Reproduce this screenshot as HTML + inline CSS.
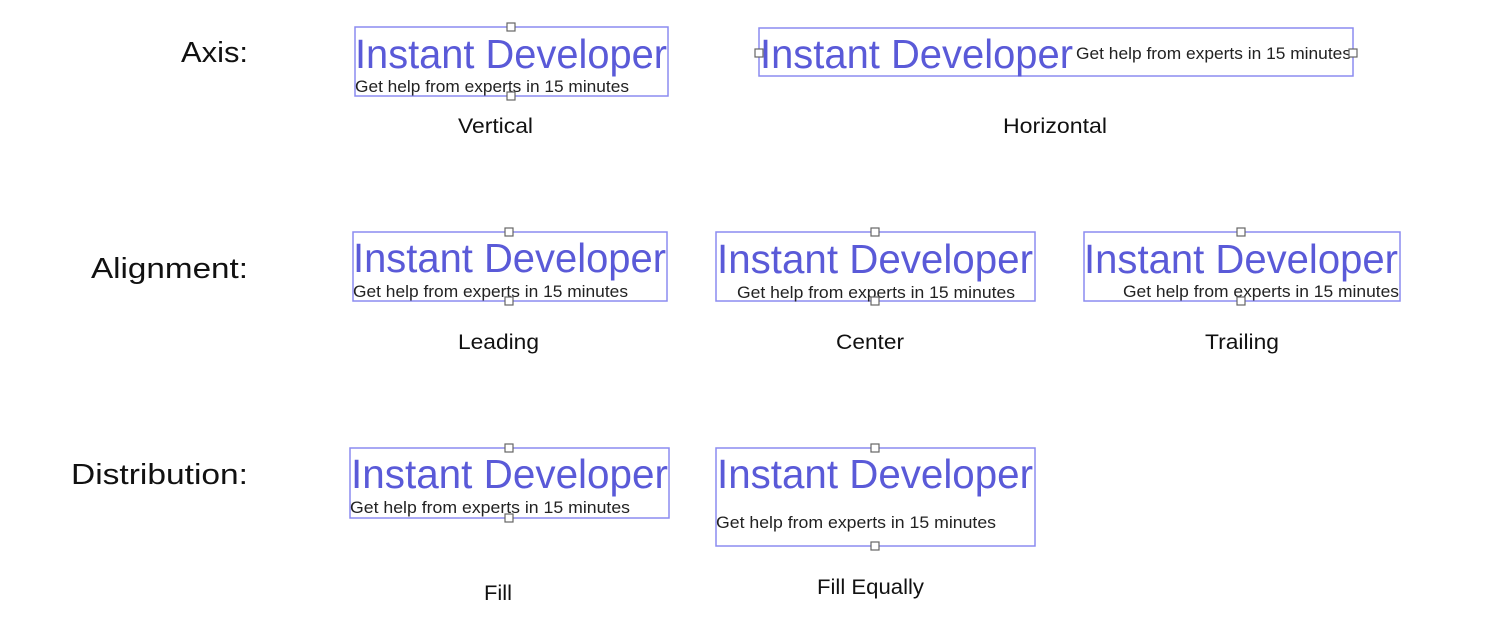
<!DOCTYPE html>
<html><head><style>html,body{margin:0;padding:0;background:#fff}svg{display:block}</style></head>
<body>
<svg width="1496" height="620" xmlns="http://www.w3.org/2000/svg" font-family="Liberation Sans, sans-serif">
<defs><style>
.big{fill:#5a5ad8;font-size:41px}
.sm{fill:#222;font-size:17px}
.lab{fill:#111;font-size:21px}
.hd{fill:#111;font-size:29px}
.box{fill:none;stroke:#8c8cf0;stroke-width:1.5}
.h{fill:#fff;stroke:#666;stroke-width:1.2}
</style></defs>

<text class="hd" x="181" y="62" textLength="67" lengthAdjust="spacingAndGlyphs">Axis:</text>
<text class="hd" x="91" y="278" textLength="157" lengthAdjust="spacingAndGlyphs">Alignment:</text>
<text class="hd" x="71" y="484" textLength="177" lengthAdjust="spacingAndGlyphs">Distribution:</text>

<!-- Vertical -->
<rect class="box" x="355" y="27" width="313" height="69"/>
<text class="big" x="355" y="68" textLength="312" lengthAdjust="spacingAndGlyphs">Instant Developer</text>
<text class="sm" x="355" y="92" textLength="274" lengthAdjust="spacingAndGlyphs">Get help from experts in 15 minutes</text>
<rect class="h" x="507" y="23" width="8" height="8"/><rect class="h" x="507" y="92" width="8" height="8"/>
<text class="lab" x="458" y="133" textLength="75" lengthAdjust="spacingAndGlyphs">Vertical</text>

<!-- Horizontal -->
<rect class="box" x="759" y="28" width="594" height="48"/>
<text class="big" x="760" y="68" textLength="313" lengthAdjust="spacingAndGlyphs">Instant Developer</text>
<text class="sm" x="1076" y="59" textLength="275" lengthAdjust="spacingAndGlyphs">Get help from experts in 15 minutes</text>
<rect class="h" x="755" y="49" width="8" height="8"/><rect class="h" x="1349" y="49" width="8" height="8"/>
<text class="lab" x="1003" y="133" textLength="104" lengthAdjust="spacingAndGlyphs">Horizontal</text>

<!-- Leading -->
<rect class="box" x="353" y="232" width="314" height="69"/>
<text class="big" x="353" y="272" textLength="313" lengthAdjust="spacingAndGlyphs">Instant Developer</text>
<text class="sm" x="353" y="297" textLength="275" lengthAdjust="spacingAndGlyphs">Get help from experts in 15 minutes</text>
<rect class="h" x="505" y="228" width="8" height="8"/><rect class="h" x="505" y="297" width="8" height="8"/>
<text class="lab" x="458" y="349" textLength="81" lengthAdjust="spacingAndGlyphs">Leading</text>

<!-- Center -->
<rect class="box" x="716" y="232" width="319" height="69"/>
<text class="big" x="717" y="273" textLength="316" lengthAdjust="spacingAndGlyphs">Instant Developer</text>
<text class="sm" x="737" y="298" textLength="278" lengthAdjust="spacingAndGlyphs">Get help from experts in 15 minutes</text>
<rect class="h" x="871" y="228" width="8" height="8"/><rect class="h" x="871" y="297" width="8" height="8"/>
<text class="lab" x="836" y="349" textLength="68" lengthAdjust="spacingAndGlyphs">Center</text>

<!-- Trailing -->
<rect class="box" x="1084" y="232" width="316" height="69"/>
<text class="big" x="1084" y="273" textLength="314" lengthAdjust="spacingAndGlyphs">Instant Developer</text>
<text class="sm" x="1123" y="297" textLength="276" lengthAdjust="spacingAndGlyphs">Get help from experts in 15 minutes</text>
<rect class="h" x="1237" y="228" width="8" height="8"/><rect class="h" x="1237" y="297" width="8" height="8"/>
<text class="lab" x="1205" y="349" textLength="74" lengthAdjust="spacingAndGlyphs">Trailing</text>

<!-- Fill -->
<rect class="box" x="350" y="448" width="319" height="70"/>
<text class="big" x="351" y="488" textLength="317" lengthAdjust="spacingAndGlyphs">Instant Developer</text>
<text class="sm" x="350" y="513" textLength="280" lengthAdjust="spacingAndGlyphs">Get help from experts in 15 minutes</text>
<rect class="h" x="505" y="444" width="8" height="8"/><rect class="h" x="505" y="514" width="8" height="8"/>
<text class="lab" x="484" y="600" textLength="28" lengthAdjust="spacingAndGlyphs">Fill</text>

<!-- Fill Equally -->
<rect class="box" x="716" y="448" width="319" height="98"/>
<text class="big" x="717" y="488" textLength="316" lengthAdjust="spacingAndGlyphs">Instant Developer</text>
<text class="sm" x="716" y="528" textLength="280" lengthAdjust="spacingAndGlyphs">Get help from experts in 15 minutes</text>
<rect class="h" x="871" y="444" width="8" height="8"/><rect class="h" x="871" y="542" width="8" height="8"/>
<text class="lab" x="817" y="594" textLength="107" lengthAdjust="spacingAndGlyphs">Fill Equally</text>
</svg>
</body></html>
